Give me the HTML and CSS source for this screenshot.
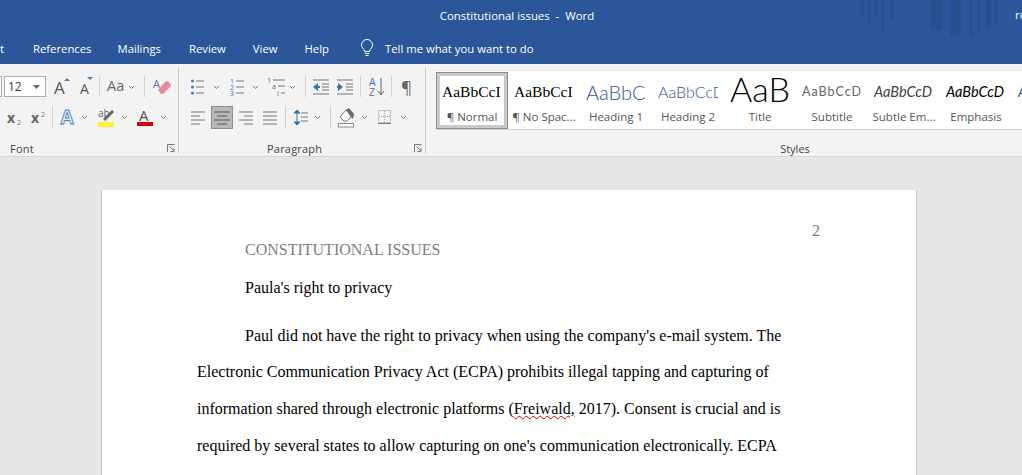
FILE: index.html
```html
<!DOCTYPE html>
<html lang="en">
<head>
<meta charset="utf-8">
<title>Constitutional issues - Word</title>
<link rel="stylesheet" href="styles.css">
</head>
<body>
<div class="window">
  <header class="titlebar">
    <svg class="pattern" width="170" height="36" viewBox="0 0 170 36">
      <g fill="#28508f">
        <rect x="20" y="0" width="4" height="15"/><rect x="28" y="0" width="3" height="22"/><rect x="34" y="0" width="3" height="16"/>
        <rect x="41" y="0" width="4" height="32"/><rect x="50" y="0" width="3" height="20"/><rect x="91" y="0" width="12" height="30"/>
        <rect x="110" y="0" width="11" height="36"/><rect x="129" y="0" width="4" height="36"/><rect x="137" y="0" width="3" height="33"/>
        <rect x="146" y="0" width="5" height="30"/><rect x="155" y="0" width="3" height="24"/>
      </g>
    </svg>
    <div class="doc-title">Constitutional issues&nbsp; -&nbsp; Word</div>
    <div class="user">ro</div>
  </header>

  <nav class="tabs">
    <span class="tab tab-clipped">nt</span>
    <span class="tab tab-references">References</span>
    <span class="tab tab-mailings">Mailings</span>
    <span class="tab tab-review">Review</span>
    <span class="tab tab-view">View</span>
    <span class="tab tab-help">Help</span>
    <svg class="bulb" width="14" height="18" viewBox="0 0 14 18"><path d="M4.500 12.500C4.500 10 1.500 9 1.500 6A5.500 5.500 0 0 1 12.500 6C12.500 9 9.500 10 9.500 12.500ZM4.800 14.500H9.200M5.500 16.500H8.500" fill="none" stroke="#fff"/></svg>
    <span class="tab tab-tell">Tell me what you want to do</span>
  </nav>

  <section class="ribbon">
    <div class="group group-font">
      <div class="row row-top">
        <span class="combo-name"></span>
        <span class="combo-size"><span>12</span><svg width="7" height="4" viewBox="0 0 7 4"><path d="M0 0H7L3.500 4Z" fill="#666"/></svg></span>
        <svg class="btn" width="27" height="21" viewBox="0 0 27 21"><text x="8" y="18" class="glyph-a">A</text><path d="M18 5l3-3 3 3Z" fill="#4a7ebb"/></svg>
        <svg class="btn" width="26" height="21" viewBox="0 0 26 21"><text x="7" y="18" class="glyph-a-small">A</text><path d="M14 1h6l-3 3Z" fill="#4a7ebb"/></svg>
        <span class="sep"></span>
        <svg class="btn" width="44" height="21" viewBox="0 0 44 21"><text x="7" y="15" class="glyph-aa">Aa</text><path d="M29 10l2.500 2.500 2.500-2.500" class="chev"/></svg>
        <span class="sep"></span>
        <svg class="btn" width="33" height="21" viewBox="0 0 33 21"><text x="8" y="12" class="glyph-erase">A</text><path d="M13 14l8-9 3 1 2 3 0 1-8 8h-2Z" fill="#e88a98"/></svg>
      </div>
      <div class="row row-bottom">
        <svg class="btn" width="26" height="23" viewBox="0 0 26 23"><text x="7" y="17" class="glyph-x">x</text><text x="17" y="19" class="glyph-sub">2</text></svg>
        <svg class="btn" width="26" height="23" viewBox="0 0 26 23"><text x="5" y="17" class="glyph-x">x</text><text x="15" y="11" class="glyph-sub">2</text></svg>
        <span class="sep"></span>
        <svg class="btn" width="39" height="23" viewBox="0 0 39 23"><text x="7.500" y="18" class="glyph-effect">A</text><path d="M29 10l2.500 2.500 2.500-2.500" class="chev"/></svg>
        <svg class="btn" width="39" height="23" viewBox="0 0 39 23"><text x="6" y="11" class="glyph-ab">ab</text><path d="M12 14l9-9" stroke="#666" stroke-width="3"/><rect x="6" y="16" width="16" height="5" fill="#ffef3a"/><path d="M30 10l2.500 2.500 2.500-2.500" class="chev"/></svg>
        <svg class="btn" width="40" height="23" viewBox="0 0 40 23"><text x="8" y="15" class="glyph-color">A</text><rect x="6" y="16" width="16" height="4" fill="#d8000c"/><path d="M30 10l2.500 2.500 2.500-2.500" class="chev"/></svg>
      </div>
      <div class="label-row label-font"><span>Font</span><svg class="launcher" width="8" height="9" viewBox="0 0 8 9"><path d="M.500 8V.500H7.500M2.500 2.500L7 7M7 4V7.500H3.500" fill="none" stroke="#777"/></svg></div>
    </div>

    <div class="group group-paragraph">
      <div class="row row-top row-para">
        <svg class="btn" width="40" height="21" viewBox="0 0 40 21"><g fill="#4a7ebb"><circle cx="8.500" cy="5" r="1.600"/><circle cx="8.500" cy="11" r="1.600"/><circle cx="8.500" cy="17" r="1.600"/></g><path d="M12 5h8M12 11h8M12 17h8" class="line"/><path d="M30 10l2.500 2.500 2.500-2.500" class="chev"/></svg>
        <svg class="btn" width="39" height="21" viewBox="0 0 39 21"><text x="6" y="8" class="num">1</text><text x="6" y="14" class="num">2</text><text x="6" y="20" class="num">3</text><path d="M12 5h8M12 11h8M12 17h8" class="line"/><path d="M29 10l2.500 2.500 2.500-2.500" class="chev"/></svg>
        <svg class="btn" width="42" height="21" viewBox="0 0 42 21"><text x="4" y="7" class="num">1</text><text x="9" y="13" class="num">a</text><text x="14" y="20" class="num">i</text><path d="M10 4h12M15 10h7M18 17h4" class="line"/><path d="M27 10l2.500 2.500 2.500-2.500" class="chev"/></svg>
        <span class="sep"></span>
        <svg class="btn" width="54" height="21" viewBox="0 0 54 21"><path d="M7 11l5-4v8Z" fill="#2e75b6"/><path d="M11 11h3" stroke="#2e75b6" stroke-width="2"/><path d="M7 4h16M16 8h7M16 11h7M16 14h7M7 18h16" class="line"/><path d="M37 11l-5-4v8Z" fill="#2e75b6"/><path d="M31 11h3" stroke="#2e75b6" stroke-width="2"/><path d="M31 4h16M40 8h7M40 11h7M40 14h7M31 18h16" class="line"/></svg>
        <span class="sep"></span>
        <svg class="btn" width="30" height="21" viewBox="0 0 30 21"><text x="8" y="10" class="az az-a">A</text><text x="8" y="20" class="az az-z">Z</text><path d="M20 2v16M17 15l3 4 3-4" fill="none" stroke="#666"/></svg>
        <span class="sep"></span>
        <svg class="btn" width="25" height="21" viewBox="0 0 25 21"><text x="9" y="17" class="pilcrow">¶</text></svg>
      </div>
      <div class="row row-bottom row-para">
        <svg class="btn" width="24" height="23" viewBox="0 0 24 23"><path d="M7 6h14M7 10h9M7 14h14M7 18h9" class="line"/></svg>
        <svg class="btn selected" width="22" height="23" viewBox="0 0 22 23"><path d="M3 6h16M6 10h10M3 14h16M6 18h10" class="line-dark"/></svg>
        <svg class="btn" width="25" height="23" viewBox="0 0 25 23"><path d="M6 6h14M11 10h9M6 14h14M11 18h9" class="line"/></svg>
        <svg class="btn" width="27" height="23" viewBox="0 0 27 23"><path d="M5 6h14M5 10h14M5 14h14M5 18h14" class="line"/></svg>
        <span class="sep"></span>
        <svg class="btn" width="44" height="23" viewBox="0 0 44 23"><path d="M11 4v15M8 7l3-3 3 3ZM8 16l3 3 3-3Z" fill="#2e75b6" stroke="#2e75b6"/><path d="M15 7h7M15 11h7M15 15h7" class="line"/><path d="M29 10l2.500 2.500 2.500-2.500" class="chev"/></svg>
        <span class="sep"></span>
        <svg class="btn" width="40" height="23" viewBox="0 0 40 23"><path d="M9 11l6-7 6 6-5 5h-3Z" fill="#fff" stroke="#777"/><path d="M15 4l3-2 5 6-1 5-3-3Z" fill="#6a6a6a"/><rect x="7.500" y="17.500" width="15" height="3.500" fill="#fff" stroke="#888"/><path d="M31 10l2.500 2.500 2.500-2.500" class="chev"/></svg>
        <svg class="btn" width="40" height="23" viewBox="0 0 40 23"><rect x="7.500" y="4.500" width="12" height="12" fill="none" stroke="#999" stroke-dasharray="1 1"/><path d="M13.500 5v12M8 10.500h12" stroke="#aaa" stroke-dasharray="1 1"/><path d="M7 17.500h13" stroke="#777"/><path d="M30 10l2.500 2.500 2.500-2.500" class="chev"/></svg>
      </div>
      <div class="label-row label-paragraph"><span>Paragraph</span><svg class="launcher" width="8" height="9" viewBox="0 0 8 9"><path d="M.500 8V.500H7.500M2.500 2.500L7 7M7 4V7.500H3.500" fill="none" stroke="#777"/></svg></div>
    </div>

    <div class="group-styles">
      <div class="gallery">
        <div class="style style-selected"><div class="preview p-normal"><span>AaBbCcI</span></div><div class="style-name">¶ Normal</div></div>
        <div class="style"><div class="preview p-normal"><span>AaBbCcI</span></div><div class="style-name">¶ No Spac...</div></div>
        <div class="style"><div class="preview p-h1"><span>AaBbCcI</span></div><div class="style-name">Heading 1</div></div>
        <div class="style"><div class="preview p-h2"><span>AaBbCcD</span></div><div class="style-name">Heading 2</div></div>
        <div class="style"><div class="preview p-title"><span>AaB</span></div><div class="style-name">Title</div></div>
        <div class="style"><div class="preview p-subtitle"><span>AaBbCcD</span></div><div class="style-name">Subtitle</div></div>
        <div class="style"><div class="preview p-subtle"><span>AaBbCcD</span></div><div class="style-name">Subtle Em...</div></div>
        <div class="style"><div class="preview p-emphasis"><span>AaBbCcD</span></div><div class="style-name">Emphasis</div></div>
        <div class="style"><div class="preview p-strong"><span>AaBbCcD</span></div><div class="style-name">Intense</div></div>
      </div>
      <div class="styles-label">Styles</div>
    </div>
  </section>

  <main class="canvas">
    <article class="page">
      <div class="page-number">2</div>
      <div class="running-head">CONSTITUTIONAL ISSUES</div>
      <p class="line-text head-line">Paula's right to privacy</p>
      <p class="line-text first-line">Paul did not have the right to privacy when using the company's e-mail system. The</p>
      <p class="line-text">Electronic Communication Privacy Act (ECPA) prohibits illegal tapping and capturing of</p>
      <p class="line-text">information shared through electronic platforms (<span class="squiggle">Freiwald,</span> 2017). Consent is crucial and is</p>
      <p class="line-text">required by several states to allow capturing on one's communication electronically. ECPA</p>
    </article>
  </main>
</div>
</body>
</html>
```

FILE: styles.css
```css
* { box-sizing: border-box; }
html, body { margin: 0; height: 100%; overflow: hidden; }
body { font-family: "Open Sans", "Liberation Sans", sans-serif; }
.window { width: 1022px; height: 475px; display: flex; flex-direction: column; overflow: hidden; background: #e6e6e6; }

.titlebar { position: relative; flex: none; height: 32px; background: #2b579a; color: #fff; display: flex; justify-content: center; align-items: center; font-size: 11.400px; padding-bottom: 1px; }
.pattern { position: absolute; left: 840px; top: 0; }
.doc-title { position: relative; left: 6px; top: 0; }
.user { position: absolute; left: 1015px; top: 7px; }

.tabs { flex: none; height: 32px; background: #2b579a; color: #fff; display: flex; align-items: center; font-size: 11.300px; }
.tab { flex: none; white-space: nowrap; }
.tab-clipped { margin-left: -7px; }
.tab-references { margin-left: 29px; }
.tab-mailings { margin-left: 26px; }
.tab-review { margin-left: 28px; }
.tab-view { margin-left: 27px; }
.tab-help { margin-left: 27px; }
.bulb { flex: none; margin-left: 31px; }
.tab-tell { margin-left: 11px; }

.ribbon { flex: none; height: 93px; background: #f3f3f3; border-bottom: 1px solid #d6d6d6; display: flex; padding: 4px 0 3px; font-size: 11px; color: #444; }
.group { flex: none; display: flex; flex-direction: column; padding-top: 8px; border-right: 1px solid #c6c6c6; }
.group-font { width: 179px; }
.group-paragraph { width: 247px; }
.row { display: flex; align-items: stretch; }
.row-top { height: 21px; }
.row-bottom { height: 23px; margin-top: 9px; }
.row-para { padding-left: 5px; }
.btn { flex: none; display: block; }
.btn.selected { margin-left: 3px; background: #b8b8b8; outline: 1px solid #8f8f8f; outline-offset: -1px; }
.sep { flex: none; width: 1px; background: #d2d2d2; margin: 0; }
.combo-name { flex: none; width: 2px; border: 1px solid #aaa; border-left: 0; background: #fff; }
.combo-size { flex: none; margin-left: 2px; width: 42px; background: #fff; border: 1px solid #ababab; display: flex; align-items: center; justify-content: space-between; padding: 0 5px 0 3px; font-size: 12px; color: #333; }
.combo-size svg { display: block; }
.chev { fill: none; stroke: #777; }
.line { fill: none; stroke: #777; }
.line-dark { fill: none; stroke: #555; }
.glyph-a { font: 17px "Open Sans", sans-serif; fill: #555; }
.glyph-a-small { font: 14px "Open Sans", sans-serif; fill: #555; }
.glyph-aa { font: 14.500px "Open Sans", sans-serif; fill: #666; }
.glyph-erase { font: 11px "Open Sans", sans-serif; fill: #6b6ba0; }
.glyph-x { font: bold 14px "Open Sans", sans-serif; fill: #666; }
.glyph-sub { font: 7px "Open Sans", sans-serif; fill: #777; }
.glyph-effect { font: bold 19px "Open Sans", sans-serif; fill: #d5e5f5; stroke: #4a7ebb; stroke-width: .8px; }
.glyph-ab { font: 10px "Open Sans", sans-serif; fill: #666; }
.glyph-color { font: 15px "Open Sans", sans-serif; fill: #555; }
.num { font: 7px "Open Sans", sans-serif; fill: #4a6fa5; }
.az { font: 10.500px "Open Sans", sans-serif; }
.az-a { fill: #2e75b6; }
.az-z { fill: #8060a8; }
.pilcrow { font: 17px "Open Sans", sans-serif; fill: #666; }

.label-row { margin-top: auto; margin-bottom: -3px; display: flex; justify-content: space-between; align-items: center; height: 15px; padding-right: 3px; letter-spacing: .2px; }
.label-font { padding-left: 10px; }
.label-paragraph { padding-left: 88px; }
.launcher { display: block; }

.group-styles { flex: 1; min-width: 0; padding-left: 10px; display: flex; flex-direction: column; }
.gallery { margin-top: 2px; height: 60px; background: #fff; border-top: 1px solid #e6e6e6; border-bottom: 1px solid #d2d2d2; display: flex; align-items: stretch; overflow: hidden; }
.style { flex: none; width: 72px; padding-top: 3px; text-align: center; color: #555; }
.style-selected { padding-top: 0; margin: 1px 0 0; height: 57px; border: 1px solid #8f8f8f; box-shadow: inset 0 0 0 3px #c9c9c9; }
.preview { height: 35px; width: 60px; margin: 0 auto; overflow: hidden; display: flex; align-items: center; justify-content: flex-start; white-space: nowrap; color: #000; }
.style-selected .preview { margin-top: 2px; height: 34px; }
.style-name { font-size: 11.500px; line-height: 16px; white-space: nowrap; }
.p-normal { font: 15.500px "Liberation Serif", serif; }
.p-h1 { font: 300 20px "Lato", sans-serif; color: #2f5496; }
.p-h2 { font: 300 16px "Lato", sans-serif; color: #2f5496; }
.p-title { font: 300 34px "Lato", sans-serif; align-items: flex-start; line-height: 30px; }
.p-subtitle { font: 12.500px "Lato", sans-serif; color: #666; letter-spacing: 1px; }
.p-subtle { font: italic 14.500px "Lato", sans-serif; color: #404040; }
.p-emphasis, .p-strong { font: italic 14.500px "Lato", sans-serif; color: #000; }
.p-strong { color: #2f5496; }
.styles-label { margin-top: auto; margin-bottom: -3px; height: 15px; text-align: center; padding-left: 132px; }

.canvas { flex: 1; min-height: 0; overflow: hidden; padding: 33px 0 0 101px; }
.page { width: 816px; height: 500px; background: #fff; border-left: 1px solid #c8c8c8; border-right: 1px solid #c8c8c8; padding: 31px 96px 0 95px; font-family: "Liberation Serif", serif; color: #000; }
.page-number { text-align: right; color: #7f7f7f; font-size: 16px; line-height: 20px; }
.running-head { padding-left: 48px; color: #7f7f7f; font-size: 16px; line-height: 20px; margin: -1px 0 10px; }
.line-text { margin: 0; font-size: 16px; line-height: 36.670px; height: 36.670px; white-space: nowrap; }
.head-line { padding-left: 48px; margin: 0; }
.first-line { padding-left: 48px; margin-top: 11px; }
.squiggle { text-decoration: underline wavy #d00000 1px; text-underline-offset: 1px; }
```
